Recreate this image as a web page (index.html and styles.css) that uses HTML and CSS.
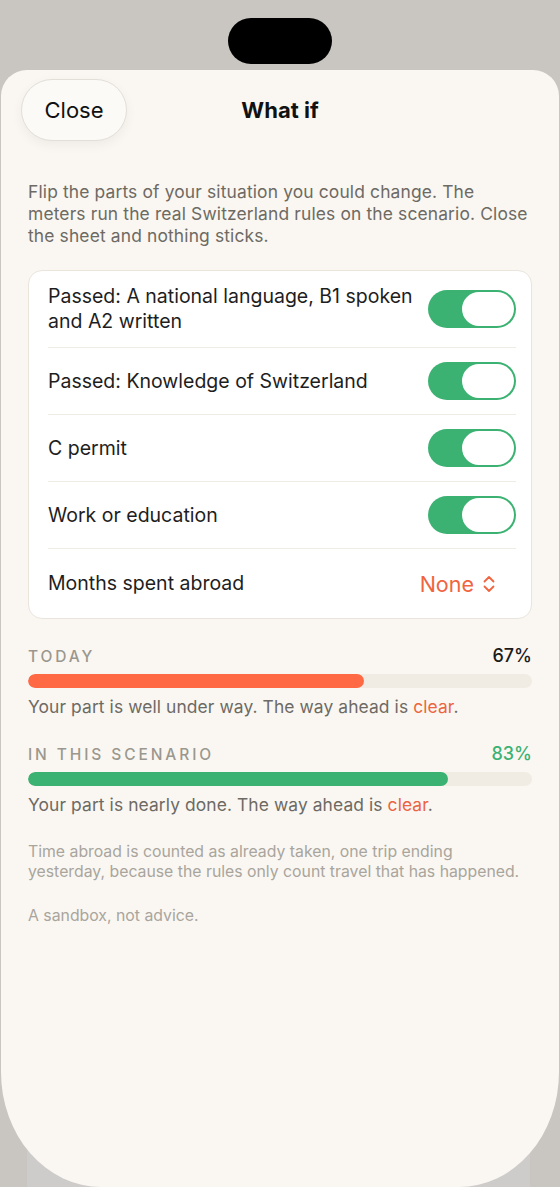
FILE: index.html
```html
<!DOCTYPE html>
<html lang="en">
<head>
    <meta charset="UTF-8">
    <meta name="viewport" content="width=device-width, initial-scale=1.0">
    <title>What if</title>
    <link rel="stylesheet" href="styles.css">
</head>
<body>
    <div class="statusbar">
        <div class="island"></div>
    </div>
    <div class="behind"></div>
    <div class="sheet">
        <div class="header">
            <button class="close">Close</button>
            <h1 class="title">What if</h1>
            <span class="spacer"></span>
        </div>

        <p class="intro">Flip the parts of your situation you could change. The meters run the real Switzerland rules on the scenario. Close the sheet and nothing sticks.</p>

        <div class="card">
            <div class="row">
                <span class="label">Passed: A national language, B1 spoken and A2 written</span>
                <span class="toggle on"><span class="thumb"></span></span>
            </div>
            <div class="row">
                <span class="label">Passed: Knowledge of Switzerland</span>
                <span class="toggle on"><span class="thumb"></span></span>
            </div>
            <div class="row">
                <span class="label">C permit</span>
                <span class="toggle on"><span class="thumb"></span></span>
            </div>
            <div class="row">
                <span class="label">Work or education</span>
                <span class="toggle on"><span class="thumb"></span></span>
            </div>
            <div class="row picker-row">
                <span class="label">Months spent abroad</span>
                <span class="picker">None
                    <svg width="14" height="20" viewBox="0 0 14 20" fill="none" stroke="currentColor" stroke-width="1.8" stroke-linecap="round" stroke-linejoin="round">
                        <path d="M2.5 7.5 L7 3 L11.5 7.5"/>
                        <path d="M2.5 12.5 L7 17 L11.5 12.5"/>
                    </svg>
                </span>
            </div>
        </div>

        <div class="meter">
            <div class="meter-head">
                <span class="meter-name">TODAY</span>
                <span class="meter-value">67%</span>
            </div>
            <div class="track"><div class="fill orange" style="width: 66.7%"></div></div>
            <p class="meter-note">Your part is well under way. The way ahead is <span class="accent">clear</span>.</p>
        </div>

        <div class="meter">
            <div class="meter-head">
                <span class="meter-name">IN THIS SCENARIO</span>
                <span class="meter-value green-text">83%</span>
            </div>
            <div class="track"><div class="fill green" style="width: 83.3%"></div></div>
            <p class="meter-note">Your part is nearly done. The way ahead is <span class="accent">clear</span>.</p>
        </div>

        <p class="footnote">Time abroad is counted as already taken, one trip ending yesterday, because the rules only count travel that has happened.</p>
        <p class="footnote">A sandbox, not advice.</p>
    </div>
</body>
</html>
```

FILE: styles.css
```css
body {
    margin: 0;
    width: 560px;
    height: 1187px;
    overflow: hidden;
    background: #c9c6c1;
    font-family: Inter, "Noto Sans", sans-serif;
    display: flex;
    flex-direction: column;
    position: relative;
}
.statusbar {
    height: 70px;
    display: flex;
    justify-content: center;
    padding-top: 18px;
    box-sizing: border-box;
}
.island {
    width: 104px;
    height: 46px;
    border-radius: 23px;
    background: #000;
}
.behind {
    position: absolute;
    left: 27px;
    right: 30px;
    bottom: 0;
    height: 120px;
    background: #cdcccb;
}
.sheet {
    position: relative;
    flex: 1;
    margin: 0 1px;
    background: #faf7f2;
    border-radius: 26px 26px 100px 100px / 26px 26px 115px 115px;
    padding: 0 27px;
    display: flex;
    flex-direction: column;
}
.header {
    display: flex;
    align-items: center;
    justify-content: space-between;
    padding-top: 9px;
    margin: 0 -7px;
}
.close {
    width: 106px;
    height: 62px;
    border-radius: 31px;
    border: 1px solid #e2dfd8;
    background: #fbfaf7;
    box-shadow: 0 4px 12px rgba(0, 0, 0, 0.05);
    font-family: inherit;
    font-size: 22px;
    color: #111;
    padding: 0;
}
.title {
    margin: 0;
    font-size: 22px;
    font-weight: 700;
    color: #111;
}
.spacer {
    width: 106px;
}
.intro {
    margin: 40px 0 0;
    font-size: 17.4px;
    line-height: 22px;
    letter-spacing: 0.15px;
    color: #6d6a64;
}
.card {
    margin-top: 23px;
    background: #fff;
    border: 1px solid #e9e5dd;
    border-radius: 14px;
    padding: 0 15px 0 19px;
}
.row {
    display: flex;
    align-items: center;
    justify-content: space-between;
    min-height: 66px;
    border-bottom: 1px solid #efece6;
    gap: 12px;
}
.row:first-child {
    min-height: 76px;
}
.row:last-child {
    border-bottom: none;
    min-height: 69px;
}
.label {
    font-size: 19.5px;
    line-height: 25px;
    color: #1e1e1e;
}
.toggle {
    flex: none;
    width: 88px;
    height: 38px;
    border-radius: 19px;
    background: #3cb272;
    display: flex;
    align-items: center;
    justify-content: flex-end;
    padding: 2px;
    box-sizing: border-box;
}
.thumb {
    width: 52px;
    height: 34px;
    border-radius: 17px;
    background: #fff;
}
.picker {
    display: flex;
    align-items: center;
    gap: 8px;
    margin-right: 20px;
    font-size: 21.5px;
    color: #f0653f;
}
.meter {
    margin-top: 26px;
}
.meter + .meter {
    margin-top: 25px;
}
.meter-head {
    display: flex;
    justify-content: space-between;
    align-items: baseline;
}
.meter-name {
    font-size: 15.5px;
    font-weight: 500;
    letter-spacing: 2.9px;
    color: #9b978e;
}
.meter-value {
    font-size: 18px;
    font-weight: 500;
    color: #1a1a1a;
}
.green-text {
    color: #3cb272;
}
.track {
    margin-top: 8px;
    height: 14px;
    border-radius: 7px;
    background: #f0ece4;
    overflow: hidden;
}
.fill {
    height: 100%;
    border-radius: 7px;
}
.orange {
    background: #ff6a45;
}
.green {
    background: #3cb272;
}
.meter-note {
    margin: 8px 0 0;
    font-size: 17.4px;
    line-height: 22px;
    letter-spacing: 0.1px;
    color: #6d6a64;
}
.accent {
    color: #ec6440;
}
.footnote {
    margin: 26px 0 0;
    font-size: 15.8px;
    line-height: 19.5px;
    color: #a9a59d;
}
.footnote + .footnote {
    margin-top: 25px;
}
```
